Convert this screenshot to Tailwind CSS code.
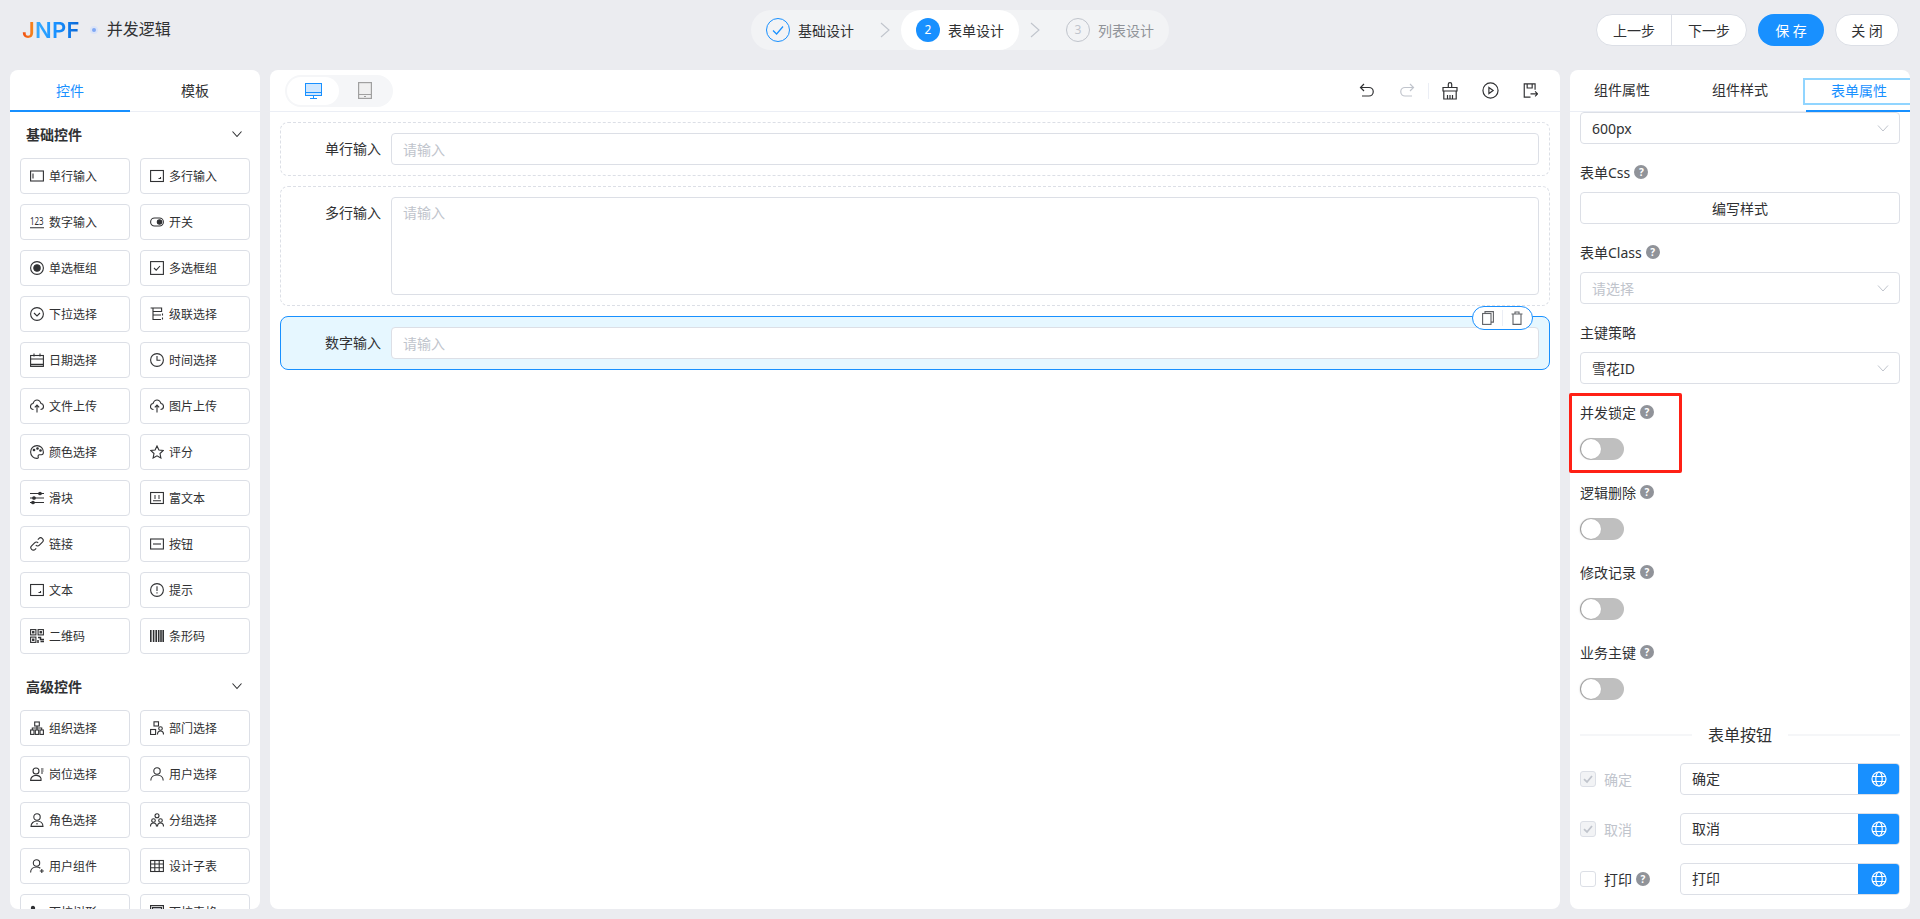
<!DOCTYPE html>
<html lang="zh-CN">
<head>
    <meta charset="UTF-8">
    <title>并发逻辑</title>
    <script src="https://cdn.jsdelivr.net/npm/@tailwindcss/browser@4"></script>
</head>
<body class="bg-[#ebecf0] font-['Noto_Sans','Noto_Sans_CJK_SC',sans-serif] text-[#303133] text-[14px] overflow-hidden">
<div class="h-[919px] w-[1920px] flex flex-col">

    <!-- 顶栏 -->
    <header class="h-[70px] shrink-0 grid grid-cols-[1fr_auto_1fr] items-start pt-[10px]">
        <div class="flex items-center h-[40px] pl-[22px]">
            <span class="font-['Inter',sans-serif] font-semibold text-[22px] leading-none tracking-[0.3px] bg-[linear-gradient(90deg,#f0490f_0%,#f58a1f_20%,#35aaff_26%,#1890ff_60%,#0a66d4_100%)] bg-clip-text text-transparent">JNPF</span>
            <span class="ml-[12px] w-[4px] h-[4px] rounded-full bg-[#7fa8f5] ring-2 ring-[#dbe4f8]"></span>
            <span class="ml-[11px] pb-[2px] text-[16px]">并发逻辑</span>
        </div>
        <div class="flex items-center h-[40px] w-[418px] rounded-full bg-[#f2f3f5]">
            <div class="w-[118px] flex items-center gap-[8px] pl-[15px]">
                <span class="w-[24px] h-[24px] rounded-full border border-[#1890ff] flex items-center justify-center">
                    <svg width="14" height="14" viewBox="0 0 14 14" fill="none" stroke="#1890ff" stroke-width="1.2"><path d="M2 7.5 5.6 11 12 3.5"/></svg>
                </span>
                <span>基础设计</span>
            </div>
            <div class="w-[32px] flex justify-center"><svg width="10" height="16" viewBox="0 0 10 16" fill="none" stroke="#c0c4cc" stroke-width="1.1"><path d="M1 1l8 7-8 7"/></svg></div>
            <div class="w-[118px] h-[40px] rounded-full bg-white flex items-center gap-[8px] pl-[15px]">
                <span class="w-[24px] h-[24px] rounded-full bg-[#1890ff] text-white text-[12px] flex items-center justify-center">2</span>
                <span>表单设计</span>
            </div>
            <div class="w-[32px] flex justify-center"><svg width="10" height="16" viewBox="0 0 10 16" fill="none" stroke="#c0c4cc" stroke-width="1.1"><path d="M1 1l8 7-8 7"/></svg></div>
            <div class="w-[118px] flex items-center gap-[8px] pl-[15px] text-[#909399]">
                <span class="w-[24px] h-[24px] rounded-full border border-[#c0c4cc] text-[#c0c4cc] text-[12px] flex items-center justify-center">3</span>
                <span>列表设计</span>
            </div>
        </div>
        <div class="flex justify-end items-center gap-[11px] pr-[21px] pt-[4px]">
            <div class="flex h-[32px] rounded-full border border-[#dcdfe6] bg-white">
                <span class="w-[75px] flex items-center justify-center border-r border-[#dcdfe6]">上一步</span>
                <span class="w-[74px] flex items-center justify-center">下一步</span>
            </div>
            <span class="w-[66px] h-[32px] rounded-full bg-[#1890ff] text-white flex items-center justify-center">保 存</span>
            <span class="w-[64px] h-[32px] rounded-full border border-[#dcdfe6] bg-white flex items-center justify-center">关 闭</span>
        </div>
    </header>

    <main class="h-[839px] flex gap-[10px] px-[10px]">

        <!-- 左侧控件 -->
        <aside class="w-[250px] shrink-0 bg-white rounded-[8px] overflow-hidden flex flex-col">
            <div class="flex h-[42px] shrink-0 border-b border-[#ebeef5]">
                <div class="w-[120px] h-[42px] border-b-2 border-[#1890ff] text-[#1890ff] flex items-center justify-center">控件</div>
                <div class="w-[130px] h-[42px] pb-[2px] flex items-center justify-center">模板</div>
            </div>
            <div class="flex-1 overflow-hidden px-[10px]">
                <div class="h-[46px] pb-[2px] flex items-center justify-between pl-[6px] pr-[7px]">
                    <span class="font-bold">基础控件</span>
                    <svg width="12" height="12" viewBox="0 0 12 12" fill="none" stroke="#303133" stroke-width="1.1"><path d="M1.5 3.500 6 8.500l4.500-5"/></svg>
                </div>
                <div id="basic" class="grid grid-cols-2 gap-[10px]"></div>
                <div class="h-[46px] pb-[2px] mt-[10px] flex items-center justify-between pl-[6px] pr-[7px]">
                    <span class="font-bold">高级控件</span>
                    <svg width="12" height="12" viewBox="0 0 12 12" fill="none" stroke="#303133" stroke-width="1.1"><path d="M1.5 3.500 6 8.500l4.500-5"/></svg>
                </div>
                <div id="advanced" class="grid grid-cols-2 gap-[10px]"></div>
            </div>
        </aside>

        <!-- 中间画布 -->
        <section class="flex-1 bg-white rounded-[8px] overflow-hidden flex flex-col">
            <div class="h-[42px] shrink-0 border-b border-[#ebeef5] flex items-center pl-[15px] pr-[10px]">
                <div class="w-[108px] h-[32px] rounded-full bg-[#f5f6f8] p-[2px] flex">
                    <span class="w-[52px] h-[28px] rounded-full bg-white flex items-center justify-center">
                        <svg width="17" height="16" viewBox="0 0 17 16" fill="none" stroke="#1890ff" stroke-width="1"><rect x=".5" y=".5" width="16" height="12" fill="#cfe7ff"/><path d="M.5 9.500h16M8.500 12.500v2.500M5 15.500h7"/></svg>
                    </span>
                    <span class="w-[52px] h-[28px] flex items-center justify-center">
                        <svg width="14" height="17" viewBox="0 0 14 17" fill="none" stroke="#a0a0a0" stroke-width="1.2"><rect x=".6" y=".6" width="12.800" height="15.800" fill="#f0f0f0"/><path d="M.6 12.500h12.800"/><path d="M6 14.500h2"/></svg>
                    </span>
                </div>
                <div class="ml-auto flex items-center">
                    <span class="w-[40px] flex justify-center"><svg width="18" height="18" viewBox="0 0 18 18" fill="none" stroke="#303133" stroke-width="1.2"><path d="M6 2 2.500 5.500 6 9M2.500 5.500H11a4.200 4.200 0 0 1 0 8.500H4"/></svg></span>
                    <span class="w-[40px] flex justify-center"><svg width="18" height="18" viewBox="0 0 18 18" fill="none" stroke="#c0c4cc" stroke-width="1.2"><path d="M12 2l3.500 3.500L12 9M15.500 5.500H7a4.200 4.200 0 0 0 0 8.500H14"/></svg></span>
                    <span class="ml-px w-px h-[16px] bg-[#ebeef5]"></span>
                    <span class="ml-px w-[40px] flex justify-center"><svg width="18" height="18" viewBox="0 0 18 18" fill="none" stroke="#303133" stroke-width="1.2"><path d="M7.300 5.500V2.300a1.700 1.700 0 0 1 3.400 0v3.200M2 5.500h14V9H2zM2.800 9v8h12.400V9M6.500 17v-4M9 17v-4M11.500 17v-4"/></svg></span>
                    <span class="w-[40px] flex justify-center"><svg width="17" height="17" viewBox="0 0 18 18" fill="none" stroke="#303133" stroke-width="1.250"><circle cx="9" cy="9" r="8"/><path d="M7.300 5.800l4.500 3.200-4.500 3.200z"/></svg></span>
                    <span class="w-[40px] flex justify-center"><svg width="15" height="15" viewBox="0 0 18 18" fill="none" stroke="#303133" stroke-width="1.400"><path d="M14.500 8V1h-13v16H9M5 1v5h6V1M9 13h8.500M14.500 10l3 3-3 3"/></svg></span>
                </div>
            </div>
            <div class="flex-1 p-[10px] flex flex-col gap-[10px]">
                <div class="h-[54px] rounded-[8px] border border-dashed border-[#dcdfe6] flex gap-[10px] pt-[10px] pr-[10px]">
                    <label class="w-[100px] h-[32px] leading-[31px] text-right">单行输入</label>
                    <input class="flex-1 h-[32px] rounded-[4px] border border-[#dcdfe6] px-[11px] placeholder:text-[#c0c4cc]" placeholder="请输入">
                </div>
                <div class="h-[120px] rounded-[8px] border border-dashed border-[#dcdfe6] flex gap-[10px] pt-[10px] pr-[10px]">
                    <label class="w-[100px] h-[32px] leading-[31px] text-right">多行输入</label>
                    <textarea class="flex-1 h-[98px] rounded-[4px] border border-[#dcdfe6] px-[11px] py-[4px] leading-[22px] resize-none placeholder:text-[#c0c4cc]" placeholder="请输入"></textarea>
                </div>
                <div class="relative h-[54px] rounded-[8px] border border-[#1890ff] bg-[#e6f7ff] flex gap-[10px] pt-[10px] pr-[10px]">
                    <label class="w-[100px] h-[32px] leading-[31px] text-right">数字输入</label>
                    <input class="flex-1 h-[32px] rounded-[4px] border border-[#dcdfe6] bg-white px-[11px] placeholder:text-[#c0c4cc]" placeholder="请输入">
                    <div class="absolute top-[-11px] right-[16px] w-[61px] h-[24px] rounded-full border border-[#1890ff] bg-white flex items-center">
                        <span class="w-[30px] flex justify-center"><svg width="12" height="14" viewBox="0 0 12 14" fill="none" stroke="#606266" stroke-width="1.1"><path d="M3 2.500V.6h8.400v10.500H9"/><rect x=".6" y="2.500" width="8.400" height="10.900"/></svg></span>
                        <span class="w-px h-[16px] bg-[#ebeef5]"></span>
                        <span class="w-[30px] flex justify-center"><svg width="12" height="14" viewBox="0 0 12 14" fill="none" stroke="#606266" stroke-width="1.1"><path d="M.5 3h11M4 3V1h4v2M2 3v10.400h8V3"/></svg></span>
                    </div>
                </div>
            </div>
        </section>

        <!-- 右侧属性 -->
        <aside class="relative w-[340px] shrink-0 bg-white rounded-[8px] flex flex-col">
            <div class="flex gap-[14px] h-[42px] shrink-0 border-b border-[#ebeef5]">
                <div class="w-[104px] h-[42px] pb-[3px] flex items-center justify-center">组件属性</div>
                <div class="w-[104px] h-[42px] pb-[3px] flex items-center justify-center">组件样式</div>
                <div class="w-[104px] h-[42px] border-b-2 border-[#1890ff] text-[#1890ff] pt-[8px]">
                    <div class="w-[107px] h-[27px] -ml-[3px] pl-[3px] pb-[2px] border-2 border-r-0 border-[#91d5ff] flex items-center justify-center">表单属性</div>
                </div>
            </div>
            <div class="flex-1 overflow-hidden rounded-b-[8px] px-[10px]">
                <div class="h-[32px] mb-[17px] rounded-[4px] border border-[#dcdfe6] flex items-center justify-between pl-[11px] pr-[10px]">
                    <span>600px</span>
                    <svg width="12" height="12" viewBox="0 0 12 12" fill="none" stroke="#c0c4cc" stroke-width="1"><path d="M1 3.500 6 9l5-5.500"/></svg>
                </div>
                <div class="mb-[17px]">
                    <div class="h-[24px] mb-[7px] pb-[2px] flex items-center gap-[4px]">表单Css <span class="w-[14px] h-[14px] rounded-full bg-[#909399] text-white text-[10px] font-bold flex items-center justify-center">?</span></div>
                    <div class="h-[32px] rounded-[4px] border border-[#dcdfe6] flex items-center justify-center">编写样式</div>
                </div>
                <div class="mb-[17px]">
                    <div class="h-[24px] mb-[7px] pb-[2px] flex items-center gap-[4px]">表单Class <span class="w-[14px] h-[14px] rounded-full bg-[#909399] text-white text-[10px] font-bold flex items-center justify-center">?</span></div>
                    <div class="h-[32px] rounded-[4px] border border-[#dcdfe6] flex items-center justify-between pl-[11px] pr-[10px] text-[#c0c4cc]">
                        <span>请选择</span>
                        <svg width="12" height="12" viewBox="0 0 12 12" fill="none" stroke="#c0c4cc" stroke-width="1"><path d="M1 3.500 6 9l5-5.500"/></svg>
                    </div>
                </div>
                <div class="mb-[17px]">
                    <div class="h-[24px] mb-[7px] pb-[2px] flex items-center">主键策略</div>
                    <div class="h-[32px] rounded-[4px] border border-[#dcdfe6] flex items-center justify-between pl-[11px] pr-[10px]">
                        <span>雪花ID</span>
                        <svg width="12" height="12" viewBox="0 0 12 12" fill="none" stroke="#c0c4cc" stroke-width="1"><path d="M1 3.500 6 9l5-5.500"/></svg>
                    </div>
                </div>
                <div id="switches"></div>

                <div class="h-[28px] mb-[14px] flex items-center gap-[16px]">
                    <span class="flex-1 h-[2px] bg-[#f5f6f8]"></span>
                    <span class="text-[16px]">表单按钮</span>
                    <span class="flex-1 h-[2px] bg-[#f5f6f8]"></span>
                </div>
                <div id="buttons"></div>
            </div>
            <!-- 标注框 -->
            <div class="absolute left-[-1px] top-[323px] w-[113px] h-[80px] border-[3px] border-[#ff2015] rounded-[2px]"></div>
        </aside>
    </main>
</div>

<script>
    const ic = {
        input: '<rect x=".6" y="2" width="12.800" height="10"/><path d="M3 4.500v5"/>',
        textarea: '<rect x=".6" y="1.500" width="12.800" height="11"/><path d="M10.500 8v1.500H8.500"/>',
        num: '<text x="0" y="10" font-size="10" textLength="13.600" lengthAdjust="spacingAndGlyphs" fill="currentColor" stroke="none">123</text><path d="M0 12.800h14"/>',
        sw: '<rect x=".6" y="3" width="12.800" height="8" rx="4"/><circle cx="9.500" cy="7" r="2.200" fill="currentColor"/>',
        radio: '<circle cx="7" cy="7" r="6.400"/><circle cx="7" cy="7" r="3.200" fill="currentColor"/>',
        check: '<rect x=".6" y=".6" width="12.800" height="12.800"/><path d="M4 7l2.200 2.200L10 5"/>',
        select: '<circle cx="7" cy="7" r="6.400"/><path d="M4 6l3 3 3-3"/>',
        cascade: '<path d="M.6 1h11v3.500H3M3 1v11.500h8M3 8h8"/><path d="M12.500 6.500v2M12.500 10.500v2"/>',
        date: '<rect x=".6" y="2.500" width="12.800" height="10.900"/><path d="M.6 6h12.800M4 .5v3M10 .5v3"/><path d="M.6 11.500h12.800" stroke-width="1.500"/>',
        time: '<circle cx="7" cy="7" r="6.400"/><path d="M7 3v4.300h3.500"/>',
        upload: '<path d="M3.500 10.500C1.600 10.500.5 9.200.5 7.500c0-1.700 1.200-2.900 2.500-3C3.700 2.500 5.200 1 7 1s3.300 1.500 4 3.500c1.400.1 2.500 1.300 2.500 3s-1.200 3-3 3"/><path d="M7 13.500V6.200M4.800 8.300 7 6l2.200 2.300"/>',
        palette: '<path d="M7 .6A6.400 6.400 0 1 0 7 13.400c1.200 0 1.600-.8 1.200-1.600-.5-1 .1-2 1.200-2h2c1.200 0 2-1 2-2.500C13.400 3.400 10.500.6 7 .6z"/><circle cx="4" cy="5" r=".8" fill="currentColor"/><circle cx="7.500" cy="3.500" r=".8" fill="currentColor"/><circle cx="10.500" cy="5.500" r=".8" fill="currentColor"/>',
        star: '<path d="M7 1l1.900 4 4.400.5-3.300 3 .9 4.500L7 10.800 3.100 13l.9-4.500-3.300-3L5.100 5z"/>',
        slider: '<path d="M0 2.500h14M0 7h14M0 11.500h14"/><circle cx="10" cy="2.500" r="1.300" fill="currentColor"/><circle cx="4" cy="7" r="1.300" fill="currentColor"/><circle cx="3" cy="11.500" r="1.300" fill="currentColor"/>',
        rich: '<rect x=".6" y="1.500" width="12.800" height="11"/><path d="M3 9.800h8M4 5h2M8 5h2M4 7h2M8 7h2"/>',
        link: '<path d="M5.800 8.200a2.500 2.500 0 0 0 3.600 0l3-3a2.500 2.500 0 0 0-3.600-3.600l-1 1"/><path d="M8.200 5.800a2.500 2.500 0 0 0-3.600 0l-3 3a2.500 2.500 0 0 0 3.600 3.600l1-1"/>',
        button: '<rect x=".6" y="2" width="12.800" height="10"/><path d="M3 7h8"/>',
        alert: '<circle cx="7" cy="7" r="6.400"/><path d="M7 3.200v4.800M7 9.300v1.300"/>',
        qr: '<rect x=".6" y=".6" width="5.300" height="5.300"/><rect x="8.100" y=".6" width="5.300" height="5.300"/><rect x=".6" y="8.100" width="5.300" height="5.300"/><rect x="2.600" y="2.600" width="1.300" height="1.300" fill="currentColor"/><rect x="10.100" y="2.600" width="1.300" height="1.300" fill="currentColor"/><rect x="2.600" y="10.100" width="1.300" height="1.300" fill="currentColor"/><path d="M8 8.500h2.500v2H14M8 11v3M10.500 12.500H14" stroke-width="1.500"/>',
        bar: '<path d="M.8 1v12M3.600 1v12M6.200 1v12M8.700 1v12M11 1v12M13.200 1v12" stroke-width="1.600"/>',
        org: '<rect x="4.700" y="1" width="4.600" height="4"/><rect x=".6" y="9" width="3.400" height="4.400"/><rect x="5.300" y="9" width="3.400" height="4.400"/><rect x="10" y="9" width="3.400" height="4.400"/><path d="M7 5v4M2.300 9V7h9.400v2"/>',
        dept: '<rect x="4" y=".8" width="4.500" height="4.200"/><rect x=".6" y="8.500" width="5" height="5"/><circle cx="10.500" cy="7.500" r="1.800"/><path d="M7.500 13.500c0-2 1.300-3.500 3-3.500s3 1.500 3 3.500"/>',
        post: '<circle cx="6" cy="4" r="3"/><path d="M.6 13.400c0-3 2.400-5 5.400-5s4.500 1.500 5 3v2zM11 2h2.500M11 4h2.500M11 6h2"/>',
        user: '<circle cx="7" cy="4" r="3.200"/><path d="M.8 13.500c0-3.400 2.800-5.500 6.200-5.500s6.200 2.100 6.200 5.500"/>',
        role: '<circle cx="7" cy="4" r="3.200"/><path d="M1 13.400c0-3.200 2.600-5.400 6-5.400s6 2.200 6 5.400zM7 10v1.500"/>',
        group: '<circle cx="7" cy="2.800" r="2"/><circle cx="3.500" cy="7.500" r="1.800"/><circle cx="10.500" cy="7.500" r="1.800"/><path d="M.5 13.500c0-2 1.300-3.500 3-3.500s3 1.500 3 3.500M7.500 13.500c0-2 1.300-3.500 3-3.500s3 1.500 3 3.500"/>',
        ucomp: '<circle cx="6.500" cy="4" r="3.200"/><path d="M.6 13.500c0-3.400 2.600-5.500 5.900-5.500 1.500 0 2.800.4 3.800 1.200M9.800 12h4M11.800 10v4"/>',
        table: '<rect x=".6" y="1.500" width="12.800" height="11"/><path d="M.6 5h12.800M.6 8.700h12.800M4.800 1.500v11M9.200 1.500v11"/>',
        person: '<circle cx="3" cy="3" r="1.600" fill="currentColor"/><path d="M3 5v9M7 9h5"/>',
        form: '<rect x=".6" y=".6" width="12.800" height="12.800" stroke-width="1.200"/><rect x="2.500" y="2.500" width="9" height="4" fill="#c0c4cc"/>'
    };

    const basic = [
        ['单行输入', 'input'], ['多行输入', 'textarea'], ['数字输入', 'num'], ['开关', 'sw'],
        ['单选框组', 'radio'], ['多选框组', 'check'], ['下拉选择', 'select'], ['级联选择', 'cascade'],
        ['日期选择', 'date'], ['时间选择', 'time'], ['文件上传', 'upload'], ['图片上传', 'upload'],
        ['颜色选择', 'palette'], ['评分', 'star'], ['滑块', 'slider'], ['富文本', 'rich'],
        ['链接', 'link'], ['按钮', 'button'], ['文本', 'textarea'], ['提示', 'alert'],
        ['二维码', 'qr'], ['条形码', 'bar']
    ];
    const advanced = [
        ['组织选择', 'org'], ['部门选择', 'dept'], ['岗位选择', 'post'], ['用户选择', 'user'],
        ['角色选择', 'role'], ['分组选择', 'group'], ['用户组件', 'ucomp'], ['设计子表', 'table'],
        ['下拉树形', 'person'], ['下拉表格', 'form']
    ];

    function tile([name, icon]) {
        return `<div class="h-[36px] rounded-[4px] border border-[#dcdfe6] flex items-center gap-[5px] pl-[9px] text-[12px]">
            <svg class="shrink-0 text-[#303133]" width="14" height="14" viewBox="0 0 14 14" fill="none" stroke="currentColor" stroke-width="1.100">${ic[icon]}</svg>
            <span class="pt-[1px]">${name}</span></div>`;
    }
    document.getElementById('basic').innerHTML = basic.map(tile).join('');
    document.getElementById('advanced').innerHTML = advanced.map(tile).join('');

    const help = '<span class="w-[14px] h-[14px] rounded-full bg-[#909399] text-white text-[10px] font-bold flex items-center justify-center">?</span>';

    document.getElementById('switches').innerHTML = ['并发锁定', '逻辑删除', '修改记录', '业务主键'].map(name => `
        <div class="mb-[17px]">
            <div class="h-[24px] mb-[7px] pb-[2px] flex items-center gap-[4px]">${name} ${help}</div>
            <div class="h-[32px] pt-[6px]">
                <div class="w-[44px] h-[22px] rounded-full bg-[#bfbfbf] p-px">
                    <div class="w-[20px] h-[20px] rounded-full bg-white shadow-[-1px_0_2px_rgba(0,0,0,0.25)]"></div>
                </div>
            </div>
        </div>`).join('');

    const globe = '<svg width="16" height="16" viewBox="0 0 16 16" fill="none" stroke="#fff" stroke-width="1.200"><circle cx="8" cy="8" r="7"/><ellipse cx="8" cy="8" rx="3.200" ry="7"/><path d="M1.500 5.500h13M1.500 10.500h13"/></svg>';
    const tick = '<svg width="12" height="12" viewBox="0 0 12 12" fill="none" stroke="#c0c4cc" stroke-width="1.800"><path d="M2 6.200 5 9l5-6"/></svg>';

    document.getElementById('buttons').innerHTML = [
        { name: '确定', off: true }, { name: '取消', off: true }, { name: '打印', off: false }
    ].map(b => `
        <div class="h-[32px] mb-[18px] flex items-center">
            <div class="w-[100px] flex items-center gap-[8px]">
                <span class="w-[16px] h-[16px] rounded-[3px] border border-[#dcdfe6] flex items-center justify-center ${b.off ? 'bg-[#f2f3f5]' : 'bg-white'}">${b.off ? tick : ''}</span>
                <span class="${b.off ? 'text-[#c0c4cc]' : ''}">${b.name}</span>
                ${b.off ? '' : help.replace('<span class="', '<span class="-ml-[4px] ')}
            </div>
            <div class="w-[220px] h-[32px] flex rounded-[4px] border border-[#dcdfe6] overflow-hidden">
                <span class="flex-1 pl-[11px] leading-[29px]">${b.name}</span>
                <span class="w-[41px] bg-[#1890ff] flex items-center justify-center">${globe}</span>
            </div>
        </div>`).join('');
</script>
</body>
</html>
